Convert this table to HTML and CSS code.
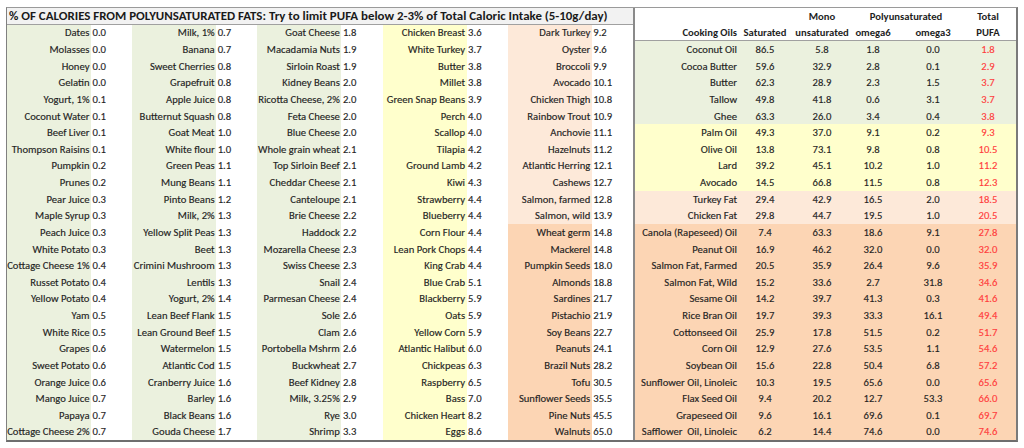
FILE: index.html
```html
<!DOCTYPE html>
<html>
<head>
<meta charset="utf-8">
<link rel="stylesheet" href="styles.css">
</head>
<body>
<div class="sheet">
  <section class="foods">
    <div class="title">% OF CALORIES FROM POLYUNSATURATED FATS: Try to limit PUFA below 2-3% of Total Caloric Intake (5-10g/day)</div>
    <div class="cols">
      <div class="col green">
        <div class="it"><span class="nm">Dates</span><span class="val">0.0</span></div>
        <div class="it"><span class="nm">Molasses</span><span class="val">0.0</span></div>
        <div class="it"><span class="nm">Honey</span><span class="val">0.0</span></div>
        <div class="it"><span class="nm">Gelatin</span><span class="val">0.0</span></div>
        <div class="it"><span class="nm">Yogurt, 1%</span><span class="val">0.1</span></div>
        <div class="it"><span class="nm">Coconut Water</span><span class="val">0.1</span></div>
        <div class="it"><span class="nm">Beef Liver</span><span class="val">0.1</span></div>
        <div class="it"><span class="nm">Thompson Raisins</span><span class="val">0.1</span></div>
        <div class="it"><span class="nm">Pumpkin</span><span class="val">0.2</span></div>
        <div class="it"><span class="nm">Prunes</span><span class="val">0.2</span></div>
        <div class="it"><span class="nm">Pear Juice</span><span class="val">0.3</span></div>
        <div class="it"><span class="nm">Maple Syrup</span><span class="val">0.3</span></div>
        <div class="it"><span class="nm">Peach Juice</span><span class="val">0.3</span></div>
        <div class="it"><span class="nm">White Potato</span><span class="val">0.3</span></div>
        <div class="it"><span class="nm">Cottage Cheese 1%</span><span class="val">0.4</span></div>
        <div class="it"><span class="nm">Russet Potato</span><span class="val">0.4</span></div>
        <div class="it"><span class="nm">Yellow Potato</span><span class="val">0.4</span></div>
        <div class="it"><span class="nm">Yam</span><span class="val">0.5</span></div>
        <div class="it"><span class="nm">White Rice</span><span class="val">0.5</span></div>
        <div class="it"><span class="nm">Grapes</span><span class="val">0.6</span></div>
        <div class="it"><span class="nm">Sweet Potato</span><span class="val">0.6</span></div>
        <div class="it"><span class="nm">Orange Juice</span><span class="val">0.6</span></div>
        <div class="it"><span class="nm">Mango Juice</span><span class="val">0.7</span></div>
        <div class="it"><span class="nm">Papaya</span><span class="val">0.7</span></div>
        <div class="it"><span class="nm">Cottage Cheese 2%</span><span class="val">0.7</span></div>
      </div>
      <div class="col green">
        <div class="it"><span class="nm">Milk, 1%</span><span class="val">0.7</span></div>
        <div class="it"><span class="nm">Banana</span><span class="val">0.7</span></div>
        <div class="it"><span class="nm">Sweet Cherries</span><span class="val">0.8</span></div>
        <div class="it"><span class="nm">Grapefruit</span><span class="val">0.8</span></div>
        <div class="it"><span class="nm">Apple Juice</span><span class="val">0.8</span></div>
        <div class="it"><span class="nm">Butternut Squash</span><span class="val">0.8</span></div>
        <div class="it"><span class="nm">Goat Meat</span><span class="val">1.0</span></div>
        <div class="it"><span class="nm">White flour</span><span class="val">1.0</span></div>
        <div class="it"><span class="nm">Green Peas</span><span class="val">1.1</span></div>
        <div class="it"><span class="nm">Mung Beans</span><span class="val">1.1</span></div>
        <div class="it"><span class="nm">Pinto Beans</span><span class="val">1.2</span></div>
        <div class="it"><span class="nm">Milk, 2%</span><span class="val">1.3</span></div>
        <div class="it"><span class="nm">Yellow Split Peas</span><span class="val">1.3</span></div>
        <div class="it"><span class="nm">Beet</span><span class="val">1.3</span></div>
        <div class="it"><span class="nm">Crimini Mushroom</span><span class="val">1.3</span></div>
        <div class="it"><span class="nm">Lentils</span><span class="val">1.3</span></div>
        <div class="it"><span class="nm">Yogurt, 2%</span><span class="val">1.4</span></div>
        <div class="it"><span class="nm">Lean Beef Flank</span><span class="val">1.5</span></div>
        <div class="it"><span class="nm">Lean Ground Beef</span><span class="val">1.5</span></div>
        <div class="it"><span class="nm">Watermelon</span><span class="val">1.5</span></div>
        <div class="it"><span class="nm">Atlantic Cod</span><span class="val">1.5</span></div>
        <div class="it"><span class="nm">Cranberry Juice</span><span class="val">1.6</span></div>
        <div class="it"><span class="nm">Barley</span><span class="val">1.6</span></div>
        <div class="it"><span class="nm">Black Beans</span><span class="val">1.6</span></div>
        <div class="it"><span class="nm">Gouda Cheese</span><span class="val">1.7</span></div>
      </div>
      <div class="col green">
        <div class="it"><span class="nm">Goat Cheese</span><span class="val">1.8</span></div>
        <div class="it"><span class="nm">Macadamia Nuts</span><span class="val">1.9</span></div>
        <div class="it"><span class="nm">Sirloin Roast</span><span class="val">1.9</span></div>
        <div class="it"><span class="nm">Kidney Beans</span><span class="val">2.0</span></div>
        <div class="it"><span class="nm">Ricotta Cheese, 2%</span><span class="val">2.0</span></div>
        <div class="it"><span class="nm">Feta Cheese</span><span class="val">2.0</span></div>
        <div class="it"><span class="nm">Blue Cheese</span><span class="val">2.0</span></div>
        <div class="it"><span class="nm">Whole grain wheat</span><span class="val">2.1</span></div>
        <div class="it"><span class="nm">Top Sirloin Beef</span><span class="val">2.1</span></div>
        <div class="it"><span class="nm">Cheddar Cheese</span><span class="val">2.1</span></div>
        <div class="it"><span class="nm">Canteloupe</span><span class="val">2.1</span></div>
        <div class="it"><span class="nm">Brie Cheese</span><span class="val">2.2</span></div>
        <div class="it"><span class="nm">Haddock</span><span class="val">2.2</span></div>
        <div class="it"><span class="nm">Mozarella Cheese</span><span class="val">2.3</span></div>
        <div class="it"><span class="nm">Swiss Cheese</span><span class="val">2.3</span></div>
        <div class="it"><span class="nm">Snail</span><span class="val">2.4</span></div>
        <div class="it"><span class="nm">Parmesan Cheese</span><span class="val">2.4</span></div>
        <div class="it"><span class="nm">Sole</span><span class="val">2.6</span></div>
        <div class="it"><span class="nm">Clam</span><span class="val">2.6</span></div>
        <div class="it"><span class="nm">Portobella Mshrm</span><span class="val">2.6</span></div>
        <div class="it"><span class="nm">Buckwheat</span><span class="val">2.7</span></div>
        <div class="it"><span class="nm">Beef Kidney</span><span class="val">2.8</span></div>
        <div class="it"><span class="nm">Milk, 3.25%</span><span class="val">2.9</span></div>
        <div class="it"><span class="nm">Rye</span><span class="val">3.0</span></div>
        <div class="it"><span class="nm">Shrimp</span><span class="val">3.3</span></div>
      </div>
      <div class="col yellow">
        <div class="it"><span class="nm">Chicken Breast</span><span class="val">3.6</span></div>
        <div class="it"><span class="nm">White Turkey</span><span class="val">3.7</span></div>
        <div class="it"><span class="nm">Butter</span><span class="val">3.8</span></div>
        <div class="it"><span class="nm">Millet</span><span class="val">3.8</span></div>
        <div class="it"><span class="nm">Green Snap Beans</span><span class="val">3.9</span></div>
        <div class="it"><span class="nm">Perch</span><span class="val">4.0</span></div>
        <div class="it"><span class="nm">Scallop</span><span class="val">4.0</span></div>
        <div class="it"><span class="nm">Tilapia</span><span class="val">4.2</span></div>
        <div class="it"><span class="nm">Ground Lamb</span><span class="val">4.2</span></div>
        <div class="it"><span class="nm">Kiwi</span><span class="val">4.3</span></div>
        <div class="it"><span class="nm">Strawberry</span><span class="val">4.4</span></div>
        <div class="it"><span class="nm">Blueberry</span><span class="val">4.4</span></div>
        <div class="it"><span class="nm">Corn Flour</span><span class="val">4.4</span></div>
        <div class="it"><span class="nm">Lean Pork Chops</span><span class="val">4.4</span></div>
        <div class="it"><span class="nm">King Crab</span><span class="val">4.4</span></div>
        <div class="it"><span class="nm">Blue Crab</span><span class="val">5.1</span></div>
        <div class="it"><span class="nm">Blackberry</span><span class="val">5.9</span></div>
        <div class="it"><span class="nm">Oats</span><span class="val">5.9</span></div>
        <div class="it"><span class="nm">Yellow Corn</span><span class="val">5.9</span></div>
        <div class="it"><span class="nm">Atlantic Halibut</span><span class="val">6.0</span></div>
        <div class="it"><span class="nm">Chickpeas</span><span class="val">6.3</span></div>
        <div class="it"><span class="nm">Raspberry</span><span class="val">6.5</span></div>
        <div class="it"><span class="nm">Bass</span><span class="val">7.0</span></div>
        <div class="it"><span class="nm">Chicken Heart</span><span class="val">8.2</span></div>
        <div class="it"><span class="nm">Eggs</span><span class="val">8.6</span></div>
      </div>
      <div class="col">
        <div class="it light"><span class="nm">Dark Turkey</span><span class="val">9.2</span></div>
        <div class="it light"><span class="nm">Oyster</span><span class="val">9.6</span></div>
        <div class="it light"><span class="nm">Broccoli</span><span class="val">9.9</span></div>
        <div class="it light"><span class="nm">Avocado</span><span class="val">10.1</span></div>
        <div class="it light"><span class="nm">Chicken Thigh</span><span class="val">10.8</span></div>
        <div class="it light"><span class="nm">Rainbow Trout</span><span class="val">10.9</span></div>
        <div class="it light"><span class="nm">Anchovie</span><span class="val">11.1</span></div>
        <div class="it light"><span class="nm">Hazelnuts</span><span class="val">11.2</span></div>
        <div class="it light"><span class="nm">Atlantic Herring</span><span class="val">12.1</span></div>
        <div class="it light"><span class="nm">Cashews</span><span class="val">12.7</span></div>
        <div class="it light"><span class="nm">Salmon, farmed</span><span class="val">12.8</span></div>
        <div class="it light"><span class="nm">Salmon, wild</span><span class="val">13.9</span></div>
        <div class="it peach"><span class="nm">Wheat germ</span><span class="val">14.8</span></div>
        <div class="it peach"><span class="nm">Mackerel</span><span class="val">14.8</span></div>
        <div class="it peach"><span class="nm">Pumpkin Seeds</span><span class="val">18.0</span></div>
        <div class="it peach"><span class="nm">Almonds</span><span class="val">18.8</span></div>
        <div class="it peach"><span class="nm">Sardines</span><span class="val">21.7</span></div>
        <div class="it peach"><span class="nm">Pistachio</span><span class="val">21.9</span></div>
        <div class="it peach"><span class="nm">Soy Beans</span><span class="val">22.7</span></div>
        <div class="it peach"><span class="nm">Peanuts</span><span class="val">24.1</span></div>
        <div class="it peach"><span class="nm">Brazil Nuts</span><span class="val">28.2</span></div>
        <div class="it peach"><span class="nm">Tofu</span><span class="val">30.5</span></div>
        <div class="it peach"><span class="nm">Sunflower Seeds</span><span class="val">35.5</span></div>
        <div class="it peach"><span class="nm">Pine Nuts</span><span class="val">45.5</span></div>
        <div class="it peach"><span class="nm">Walnuts</span><span class="val">65.0</span></div>
      </div>
    </div>
  </section>
  <section class="oils">
    <div class="ohead">
      <span class="h1 c3">Mono</span>
      <span class="h1 poly">Polyunsaturated</span>
      <span class="h1 c6">Total</span>
      <span class="h2 on">Cooking Oils</span>
      <span class="h2">Saturated</span>
      <span class="h2">unsaturated</span>
      <span class="h2">omega6</span>
      <span class="h2">omega3</span>
      <span class="h2">PUFA</span>
    </div>
    <div class="orow g"><span class="on">Coconut Oil</span><span>86.5</span><span>5.8</span><span>1.8</span><span>0.0</span><span class="tot">1.8</span></div>
    <div class="orow g"><span class="on">Cocoa Butter</span><span>59.6</span><span>32.9</span><span>2.8</span><span>0.1</span><span class="tot">2.9</span></div>
    <div class="orow g"><span class="on">Butter</span><span>62.3</span><span>28.9</span><span>2.3</span><span>1.5</span><span class="tot">3.7</span></div>
    <div class="orow g"><span class="on">Tallow</span><span>49.8</span><span>41.8</span><span>0.6</span><span>3.1</span><span class="tot">3.7</span></div>
    <div class="orow g"><span class="on">Ghee</span><span>63.3</span><span>26.0</span><span>3.4</span><span>0.4</span><span class="tot">3.8</span></div>
    <div class="orow y"><span class="on">Palm Oil</span><span>49.3</span><span>37.0</span><span>9.1</span><span>0.2</span><span class="tot">9.3</span></div>
    <div class="orow y"><span class="on">Olive Oil</span><span>13.8</span><span>73.1</span><span>9.8</span><span>0.8</span><span class="tot">10.5</span></div>
    <div class="orow y"><span class="on">Lard</span><span>39.2</span><span>45.1</span><span>10.2</span><span>1.0</span><span class="tot">11.2</span></div>
    <div class="orow y"><span class="on">Avocado</span><span>14.5</span><span>66.8</span><span>11.5</span><span>0.8</span><span class="tot">12.3</span></div>
    <div class="orow l"><span class="on">Turkey Fat</span><span>29.4</span><span>42.9</span><span>16.5</span><span>2.0</span><span class="tot">18.5</span></div>
    <div class="orow l"><span class="on">Chicken Fat</span><span>29.8</span><span>44.7</span><span>19.5</span><span>1.0</span><span class="tot">20.5</span></div>
    <div class="orow p"><span class="on">Canola (Rapeseed) Oil</span><span>7.4</span><span>63.3</span><span>18.6</span><span>9.1</span><span class="tot">27.8</span></div>
    <div class="orow p"><span class="on">Peanut Oil</span><span>16.9</span><span>46.2</span><span>32.0</span><span>0.0</span><span class="tot">32.0</span></div>
    <div class="orow p"><span class="on">Salmon Fat, Farmed</span><span>20.5</span><span>35.9</span><span>26.4</span><span>9.6</span><span class="tot">35.9</span></div>
    <div class="orow p"><span class="on">Salmon Fat, Wild</span><span>15.2</span><span>33.6</span><span>2.7</span><span>31.8</span><span class="tot">34.6</span></div>
    <div class="orow p"><span class="on">Sesame Oil</span><span>14.2</span><span>39.7</span><span>41.3</span><span>0.3</span><span class="tot">41.6</span></div>
    <div class="orow p"><span class="on">Rice Bran Oil</span><span>19.7</span><span>39.3</span><span>33.3</span><span>16.1</span><span class="tot">49.4</span></div>
    <div class="orow p"><span class="on">Cottonseed Oil</span><span>25.9</span><span>17.8</span><span>51.5</span><span>0.2</span><span class="tot">51.7</span></div>
    <div class="orow p"><span class="on">Corn Oil</span><span>12.9</span><span>27.6</span><span>53.5</span><span>1.1</span><span class="tot">54.6</span></div>
    <div class="orow p"><span class="on">Soybean Oil</span><span>15.6</span><span>22.8</span><span>50.4</span><span>6.8</span><span class="tot">57.2</span></div>
    <div class="orow p"><span class="on">Sunflower Oil, Linoleic</span><span>10.3</span><span>19.5</span><span>65.6</span><span>0.0</span><span class="tot">65.6</span></div>
    <div class="orow p"><span class="on">Flax Seed Oil</span><span>9.4</span><span>20.2</span><span>12.7</span><span>53.3</span><span class="tot">66.0</span></div>
    <div class="orow p"><span class="on">Grapeseed Oil</span><span>9.6</span><span>16.1</span><span>69.6</span><span>0.1</span><span class="tot">69.7</span></div>
    <div class="orow p"><span class="on">Safflower&nbsp; Oil, Linoleic</span><span>6.2</span><span>14.4</span><span>74.6</span><span>0.0</span><span class="tot">74.6</span></div>
  </section>
</div>
</body>
</html>
```
FILE: styles.css
```css
html, body {
  margin: 0;
  padding: 0;
  background: #ffffff;
}
body {
  font-family: "Carlito", "Liberation Sans", sans-serif;
  font-size: 10.65px;
  color: #1f1f1f;
  -webkit-text-stroke: 0.15px currentColor;
}
.sheet {
  display: flex;
  margin: 7px 0 0 6px;
  width: 1012px;
  box-sizing: border-box;
  border-top: 1px solid #9a9a9a;
  border-left: 1px solid #808080;
  border-right: 2px solid #7a7a7a;
  border-bottom: 2px solid #6e6e6e;
}
.foods {
  width: 626px;
  border-right: 2px solid #8a8a8a;
}
.title {
  height: 16.625px;
  box-sizing: border-box;
  border-bottom: 1px solid #a0a0a0;
  background: #f2f2f2;
  font-weight: bold;
  font-size: 12.9px;
  padding-left: 2px;
  display: flex;
  align-items: center;
  white-space: nowrap;
  overflow: hidden;
  color: #1a1a1a;
  -webkit-text-stroke: 0;
}
.cols {
  display: flex;
}
.col {
  display: flex;
  flex-direction: column;
  width: 125.2px;
}
.it {
  display: flex;
  height: 16.625px;
}
.nm {
  width: 84px;
  flex: none;
  display: flex;
  align-items: center;
  justify-content: flex-end;
  padding-right: 1.5px;
  box-sizing: border-box;
  white-space: nowrap;
  overflow: hidden;
}
.val {
  display: flex;
  align-items: center;
  padding-left: 1.5px;
  white-space: nowrap;
}
.green .nm { background: #ebf1de; }
.yellow .nm { background: #ffffcc; }
.light .nm { background: #fde9d9; }
.peach .nm { background: #fcd5b4; }

.oils {
  width: 381px;
}
.ohead,
.orow {
  display: grid;
  grid-template-columns: 104px 52px 62px 40px 80px 30px 13px;
  text-align: center;
  white-space: nowrap;
}
.ohead {
  height: 33.25px;
  box-sizing: border-box;
  border-bottom: 1px solid #a0a0a0;
  grid-template-rows: 16.625px 15.625px;
  font-weight: bold;
  align-items: center;
  -webkit-text-stroke: 0;
}
.h1 { grid-row: 1; }
.h2 { grid-row: 2; }
.c3 { grid-column: 3; }
.poly { grid-column: 4 / span 2; padding-right: 14px; }
.c6 { grid-column: 6; }
.orow {
  height: 16.625px;
  align-items: center;
}
.on {
  text-align: right;
  padding-right: 2px;
}
.h2.on { grid-column: 1; }
.tot { color: #ff3c3c; }
.g { background: #ebf1de; }
.y { background: #ffffcc; }
.l { background: #fde9d9; }
.p { background: #fcd5b4; }
```
